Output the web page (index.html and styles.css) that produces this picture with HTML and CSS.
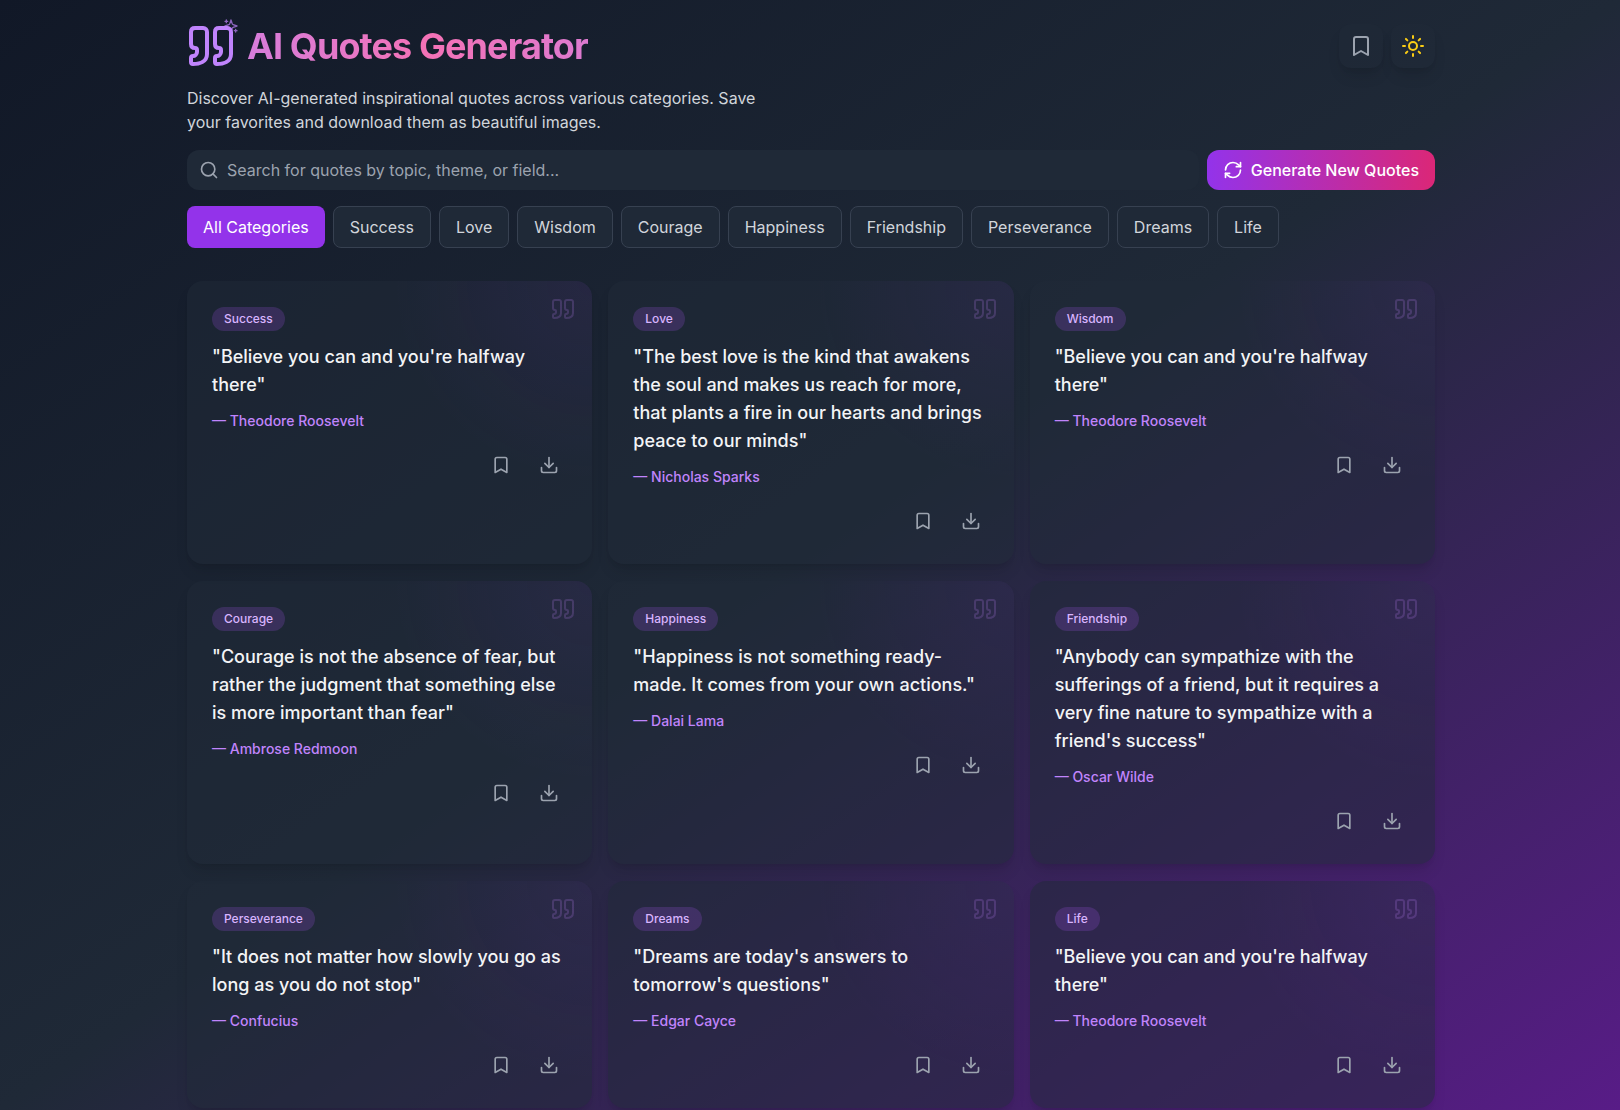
FILE: index.html
```html
<!DOCTYPE html>
<html lang="en">
<head>
<meta charset="utf-8">
<meta name="viewport" content="width=device-width, initial-scale=1">
<title>AI Quotes Generator</title>
<link rel="stylesheet" href="styles.css">
</head>
<body>
<svg class="sprite" aria-hidden="true">
  <symbol id="quote" viewBox="0 0 24 24"><path d="M3 21c3 0 7-1 7-5V5c0-1.25-.756-2.017-2-2H4c-1.25 0-2 .75-2 1.972V11c0 1.25.75 2 2 2 1 0 1 0 1 1v1c0 1-1 2-2 2s-1 .008-1 1.031V20c0 1 0 1 1 1z"/><path d="M15 21c3 0 7-1 7-5V5c0-1.25-.757-2.017-2-2h-4c-1.25 0-2 .75-2 1.972V11c0 1.25.75 2 2 2 1 0 1 0 1 1v1c0 1-1 2-2 2s-1 .008-1 1.031V20c0 1 0 1 1 1z"/></symbol>
  <symbol id="sparkles" viewBox="0 0 24 24"><path d="m12 3-1.912 5.813a2 2 0 0 1-1.275 1.275L3 12l5.813 1.912a2 2 0 0 1 1.275 1.275L12 21l1.912-5.813a2 2 0 0 1 1.275-1.275L21 12l-5.813-1.912a2 2 0 0 1-1.275-1.275L12 3Z"/><path d="M5 3v4M19 17v4M3 5h4M17 19h4"/></symbol>
  <symbol id="bookmark" viewBox="0 0 24 24"><path d="m19 21-7-4-7 4V5a2 2 0 0 1 2-2h10a2 2 0 0 1 2 2v16z"/></symbol>
  <symbol id="download" viewBox="0 0 24 24"><path d="M21 15v4a2 2 0 0 1-2 2H5a2 2 0 0 1-2-2v-4"/><path d="m7 10 5 5 5-5"/><path d="M12 15V3"/></symbol>
  <symbol id="sun" viewBox="0 0 24 24"><circle cx="12" cy="12" r="4"/><path d="M12 2v2M12 20v2M4.930 4.930l1.410 1.410M17.660 17.660l1.410 1.410M2 12h2M20 12h2M6.340 17.660l-1.410 1.410M19.070 4.930l-1.410 1.410"/></symbol>
  <symbol id="search" viewBox="0 0 24 24"><circle cx="11" cy="11" r="8"/><path d="m21 21-4.300-4.300"/></symbol>
  <symbol id="refresh" viewBox="0 0 24 24"><path d="M3 12a9 9 0 0 1 9-9 9.750 9.750 0 0 1 6.740 2.740L21 8"/><path d="M21 3v5h-5"/><path d="M21 12a9 9 0 0 1-9 9 9.750 9.750 0 0 1-6.740-2.740L3 16"/><path d="M8 16H3v5"/></symbol>
</svg>
<div class="container">
  <header class="header">
    <div class="brand">
      <span class="logo"><svg class="icon logo-mark"><use href="#quote"/></svg><svg class="icon logo-sparkles"><use href="#sparkles"/></svg></span>
      <h1 class="title">AI Quotes Generator</h1>
    </div>
    <div class="header-actions">
      <button class="round-button" type="button" aria-label="Saved quotes"><svg class="icon"><use href="#bookmark"/></svg></button>
      <button class="round-button sun" type="button" aria-label="Switch to light theme"><svg class="icon"><use href="#sun"/></svg></button>
    </div>
  </header>
  <p class="intro">Discover AI-generated inspirational quotes across various categories. Save your favorites and download them as beautiful images.</p>
  <form class="search-row">
    <label class="search"><svg class="icon"><use href="#search"/></svg><input type="text" aria-label="Search quotes" placeholder="Search for quotes by topic, theme, or field..."></label>
    <button class="generate" type="button"><svg class="icon"><use href="#refresh"/></svg>Generate New Quotes</button>
  </form>
  <nav class="categories" aria-label="Categories">
    <button class="category active" type="button">All Categories</button>
    <button class="category" type="button">Success</button>
    <button class="category" type="button">Love</button>
    <button class="category" type="button">Wisdom</button>
    <button class="category" type="button">Courage</button>
    <button class="category" type="button">Happiness</button>
    <button class="category" type="button">Friendship</button>
    <button class="category" type="button">Perseverance</button>
    <button class="category" type="button">Dreams</button>
    <button class="category" type="button">Life</button>
  </nav>
  <main class="grid" id="quotes"></main>
</div>
<template id="card">
  <article class="card">
    <svg class="icon card-mark"><use href="#quote"/></svg>
    <span class="badge"></span>
    <p class="quote"></p>
    <p class="author"></p>
    <div class="card-actions">
      <button type="button" aria-label="Save quote"><svg class="icon"><use href="#bookmark"/></svg></button>
      <button type="button" aria-label="Download quote"><svg class="icon"><use href="#download"/></svg></button>
    </div>
  </article>
</template>
<script src="quotes.js"></script>
</body>
</html>
```
FILE: styles.css
```css
*, *::before, *::after { box-sizing: border-box; }
body {
  margin: 0;
  min-height: 100vh;
  font-family: Inter, "Liberation Sans", sans-serif;
  font-size: 16px;
  line-height: 24px;
  color: #d1d5db;
  background: linear-gradient(to bottom right, #111827, #1f2937, #581c87);
}
h1, p { margin: 0; }
button, input { font: inherit; }
button { border: 0; padding: 0; cursor: pointer; color: inherit; background: none; }
.sprite { display: none; }
.icon {
  display: block;
  flex: none;
  width: 20px;
  height: 20px;
  fill: none;
  stroke: currentColor;
  stroke-width: 2;
  stroke-linecap: round;
  stroke-linejoin: round;
}
.container { max-width: 1280px; margin: 0 auto; padding: 22px 15px 0 17px; }
.header { display: flex; align-items: center; justify-content: space-between; height: 48px; }
.brand { display: flex; align-items: center; gap: 12px; }
.logo { position: relative; color: #c084fc; }
.logo-mark { width: 48px; height: 48px; }
.logo-sparkles { position: absolute; top: -4px; right: -4px; width: 16px; height: 16px; opacity: .7; }
.title {
  font-size: 36px;
  line-height: 40px;
  font-weight: 700;
  letter-spacing: -0.025em;
  color: transparent;
  background: linear-gradient(to right, #d67ddb, #f472b6 53%, #dd7ad0);
  background-clip: text;
  -webkit-background-clip: text;
}
.header-actions { display: flex; gap: 8px; }
.round-button {
  display: grid;
  place-items: center;
  width: 44px;
  height: 44px;
  border-radius: 12px;
  color: #9ca3af;
  background: rgba(31, 41, 55, .5);
  box-shadow: 0 10px 15px -3px rgba(0, 0, 0, .1), 0 4px 6px -4px rgba(0, 0, 0, .1);
}
.round-button .icon { width: 24px; height: 24px; }
.round-button.sun { color: #facc15; }
.intro { max-width: 576px; margin-top: 16px; }
.search-row { display: flex; gap: 8px; margin-top: 16px; }
.search {
  display: flex;
  flex: 1;
  align-items: center;
  gap: 8px;
  height: 40px;
  padding: 0 12px;
  border-radius: 12px;
  color: #9ca3af;
  background: #1f2937;
}
.search input { flex: 1; min-width: 0; padding: 0; border: 0; outline: 0; color: #fff; background: none; }
.search input::placeholder { color: #9ca3af; opacity: 1; }
.generate {
  display: flex;
  align-items: center;
  gap: 8px;
  height: 40px;
  padding: 0 16px;
  border-radius: 12px;
  font-weight: 500;
  color: #fff;
  background: linear-gradient(to right, #9333ea, #db2777);
}
.categories { display: flex; flex-wrap: wrap; gap: 8px; margin-top: 16px; }
.category {
  height: 42px;
  padding: 0 16px;
  border: 1px solid #374151;
  border-radius: 8px;
  background: #1f2937;
}
.category.active { border: 0; color: #fff; background: #9333ea; }
.grid { display: grid; grid-template-columns: repeat(auto-fill, minmax(360px, 1fr)); gap: 17px 16px; margin-top: 33px; }
.card {
  position: relative;
  padding: 26px 25px 25px;
  border-radius: 16px;
  background:
    radial-gradient(circle 200px at 100% 0, rgba(147, 51, 234, .08), transparent),
    rgba(31, 41, 55, .5);
  box-shadow: 0 10px 15px -3px rgba(0, 0, 0, .1), 0 4px 6px -4px rgba(0, 0, 0, .1);
}
.card-mark { position: absolute; top: 16px; right: 17px; width: 24px; height: 24px; color: #c084fc; opacity: .2; }
.badge {
  display: block;
  width: fit-content;
  padding: 0 12px;
  border-radius: 12px;
  font-size: 12px;
  font-weight: 500;
  color: #d8b4fe;
  background: rgba(168, 85, 247, .2);
}
.quote { margin-top: 12px; font-size: 18px; line-height: 28px; font-weight: 500; color: #f3f4f6; }
.author { margin-top: 12px; font-size: 14px; line-height: 20px; font-weight: 500; color: #c084fc; }
.card-actions { display: flex; justify-content: flex-end; gap: 12px; margin-top: 16px; color: #9ca3af; }
.card-actions button { padding: 8px; }
```
FILE: quotes.js
```js
const quotes = [
  ["Success", "Believe you can and you're halfway there", "Theodore Roosevelt"],
  ["Love", "The best love is the kind that awakens the soul and makes us reach for more, that plants a fire in our hearts and brings peace to our minds", "Nicholas Sparks"],
  ["Wisdom", "Believe you can and you're halfway there", "Theodore Roosevelt"],
  ["Courage", "Courage is not the absence of fear, but rather the judgment that something else is more important than fear", "Ambrose Redmoon"],
  ["Happiness", "Happiness is not something ready-made. It comes from your own actions.", "Dalai Lama"],
  ["Friendship", "Anybody can sympathize with the sufferings of a friend, but it requires a very fine nature to sympathize with a friend's success", "Oscar Wilde"],
  ["Perseverance", "It does not matter how slowly you go as long as you do not stop", "Confucius"],
  ["Dreams", "Dreams are today's answers to tomorrow's questions", "Edgar Cayce"],
  ["Life", "Believe you can and you're halfway there", "Theodore Roosevelt"]
];
const grid = document.getElementById("quotes");
const template = document.getElementById("card");
for (const [category, text, author] of quotes) {
  const card = template.content.cloneNode(true);
  card.querySelector(".badge").textContent = category;
  card.querySelector(".quote").textContent = `"${text}"`;
  card.querySelector(".author").textContent = `— ${author}`;
  grid.append(card);
}
```
